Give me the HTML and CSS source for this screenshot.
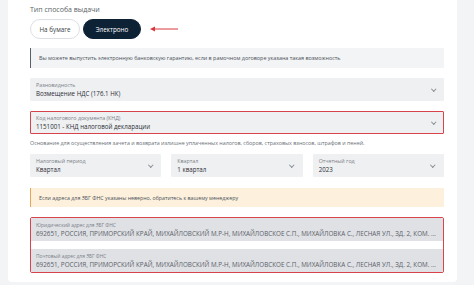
FILE: index.html
```html
<!DOCTYPE html>
<html lang="ru">

<head>
    <meta charset="UTF-8">
    <meta name="viewport" content="width=device-width, initial-scale=1.0">
    <title>Выдача гарантии</title>
    <link rel="stylesheet" href="styles.css">
</head>

<body>
    <div class="card">
        <div class="section-title">Тип способа выдачи</div>
        <div class="toggle-row">
            <button class="pill">На бумаге</button>
            <button class="pill active">Электроно</button>
            <svg class="arrow" width="28" height="6" viewBox="0 0 28 6">
                <line x1="3" y1="3" x2="28" y2="3" stroke="#d9363e" stroke-width="1" />
                <path d="M0 3 L5 0.5 L5 5.5 Z" fill="#d9363e" />
            </svg>
        </div>

        <div class="note">Вы можете выпустить электронную банковскую гарантию, если в рамочном договоре указана такая возможность</div>

        <div class="field">
            <div class="field-body">
                <span class="field-label">Разновидность</span>
                <span class="field-value">Возмещение НДС (176.1 НК)</span>
            </div>
            <span class="chevron"></span>
        </div>

        <div class="field error">
            <div class="field-body">
                <span class="field-label">Код налогового документа (КНД)</span>
                <span class="field-value">1151001 - КНД налоговой декларации</span>
            </div>
            <span class="chevron"></span>
        </div>
        <div class="hint">Основание для осуществления зачета и возврата излишне уплаченных налогов, сборов, страховых взносов, штрафов и пеней.</div>

        <div class="field-row">
            <div class="field">
                <div class="field-body">
                    <span class="field-label">Налоговый период</span>
                    <span class="field-value">Квартал</span>
                </div>
                <span class="chevron"></span>
            </div>
            <div class="field">
                <div class="field-body">
                    <span class="field-label">Квартал</span>
                    <span class="field-value">1 квартал</span>
                </div>
                <span class="chevron"></span>
            </div>
            <div class="field">
                <div class="field-body">
                    <span class="field-label">Отчетный год</span>
                    <span class="field-value">2023</span>
                </div>
                <span class="chevron"></span>
            </div>
        </div>

        <div class="note warning">Если адреса для ЗБГ ФНС указаны неверно, обратитесь к вашему менеджеру</div>

        <div class="address-group">
            <div class="address">
                <span class="address-label">Юридический адрес для ЗБГ ФНС</span>
                <span class="address-value">692651, РОССИЯ, ПРИМОРСКИЙ КРАЙ, МИХАЙЛОВСКИЙ М.Р-Н, МИХАЙЛОВСКОЕ С.П., МИХАЙЛОВКА С., ЛЕСНАЯ УЛ., ЗД. 2, КОМ. ...</span>
            </div>
            <div class="address">
                <span class="address-label">Почтовый адрес для ЗБГ ФНС</span>
                <span class="address-value">692651, РОССИЯ, ПРИМОРСКИЙ КРАЙ, МИХАЙЛОВСКИЙ М.Р-Н, МИХАЙЛОВСКОЕ С.П., МИХАЙЛОВКА С., ЛЕСНАЯ УЛ., ЗД. 2, КОМ. ...</span>
            </div>
        </div>
    </div>
</body>

</html>
```

FILE: styles.css
```css
* {
    box-sizing: border-box;
}

body {
    margin: 0;
    background: #f3f4f6;
    font-family: "Open Sans", "Noto Sans", sans-serif;
    color: #2b2f36;
}

.card {
    background: #ffffff;
    margin: 0 17px 0 8px;
    padding: 5px 13px 10px 22px;
    height: 282px;
    border-radius: 0 0 4px 4px;
}

.section-title {
    font-size: 7px;
    color: #5a5f66;
    line-height: 10px;
}

.toggle-row {
    display: flex;
    align-items: center;
    gap: 3px;
    margin-top: 4px;
}

.pill {
    font-family: inherit;
    font-size: 6.3px;
    height: 20px;
    padding: 0;
    white-space: nowrap;
    border-radius: 10px;
    border: 1px solid #dcdfe3;
    background: #ffffff;
    color: #3a3f46;
}

.pill:first-child {
    width: 50px;
}

.pill.active {
    width: 58px;
    background: #0e2236;
    border-color: #0e2236;
    color: #ffffff;
}

.arrow {
    margin-left: 6px;
}

.note {
    margin-top: 9px;
    height: 20px;
    display: flex;
    align-items: center;
    padding-left: 8px;
    font-size: 5.4px;
    color: #4a4f56;
    background: #f3f4f6;
    border-left: 1px solid #5b6068;
}

.note.warning {
    margin-top: 11px;
    height: 19px;
    font-size: 5.3px;
    background: #fdf1de;
    border-left-color: #e3a65a;
}

.field {
    margin-top: 10px;
    height: 23px;
    display: flex;
    align-items: center;
    justify-content: space-between;
    padding: 0 8px 0 5px;
    background: #eff0f2;
    border: 1px solid #eff0f2;
    border-radius: 1px;
}

.field.error {
    border-color: #d9444c;
}

.field-body {
    display: flex;
    flex-direction: column;
    min-width: 0;
}

.field-label {
    font-size: 5.3px;
    line-height: 8px;
    color: #7a7f87;
}

.field-value {
    font-size: 6.2px;
    line-height: 10px;
    color: #2b2f36;
}

.chevron {
    width: 3.5px;
    height: 3.5px;
    border-right: 1px solid #8a8f96;
    border-bottom: 1px solid #8a8f96;
    transform: rotate(45deg);
    margin-top: -2px;
}

.hint {
    margin-top: 5px;
    font-size: 5.35px;
    line-height: 8px;
    color: #6a6f76;
}

.field-row {
    display: grid;
    grid-template-columns: 1fr 1fr 1fr;
    gap: 10px;
    margin-top: 7px;
}

.field-row .field {
    margin-top: 0;
}

.address-group {
    margin-top: 10px;
    border: 1px solid #d9444c;
    border-radius: 2px;
    display: flex;
    flex-direction: column;
    gap: 8px;
    background: #ffffff;
}

.address {
    height: 23px;
    display: flex;
    flex-direction: column;
    justify-content: center;
    padding: 0 5px;
    background: #dfe1e5;
}

.address-label {
    font-size: 4.9px;
    line-height: 8px;
    color: #7a7f87;
}

.address-value {
    font-size: 6.3px;
    line-height: 10px;
    color: #5b6068;
    white-space: nowrap;
}
```
